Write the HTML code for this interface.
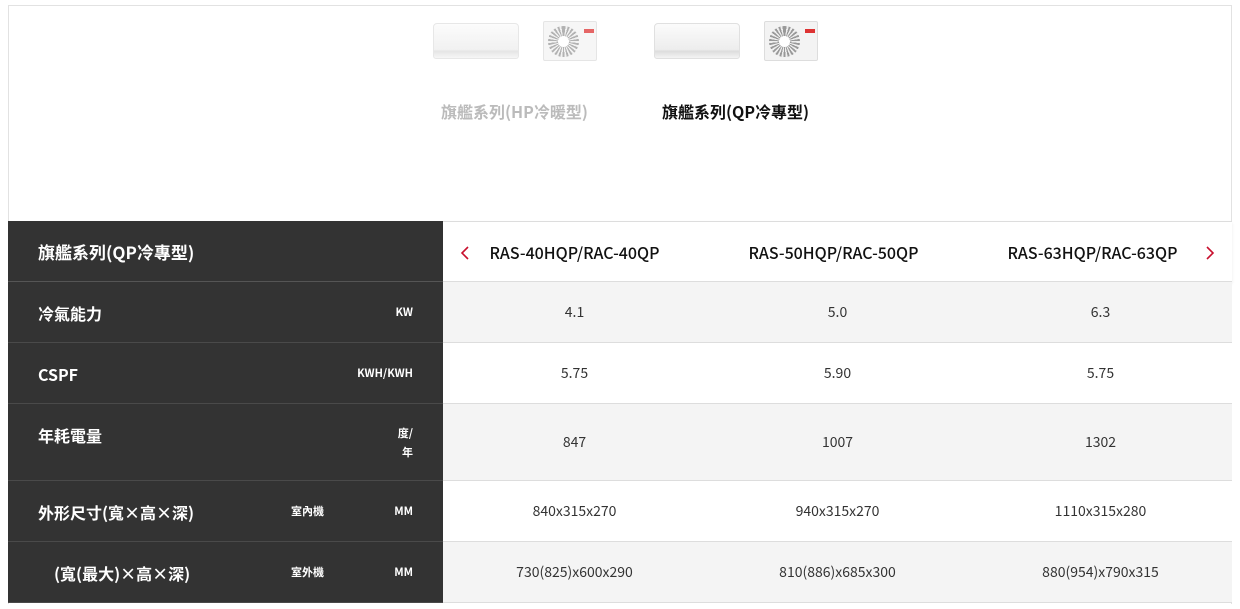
<!DOCTYPE html>
<html><head><meta charset="utf-8"><style>
*{margin:0;padding:0;box-sizing:border-box}
body{width:1240px;height:609px;background:#fff;font-family:"Noto Sans CJK TC","Liberation Sans",sans-serif;position:relative;overflow:hidden}
.box{position:absolute;left:8px;top:5px;width:1224px;height:599px;border:1px solid #e2e2e2;border-bottom:none}
.abs{position:absolute}
.tab{font-size:16px;font-weight:bold;line-height:20px}
.row{position:absolute;left:8px;width:1224px}
.l{position:absolute;left:0;top:0;width:435px;height:100%;background:#333;color:#fff;border-bottom:1px solid #4a4a4a}
.r{position:absolute;left:435px;top:0;width:789px;height:100%;border-bottom:1px solid #ddd}
.c{position:absolute;top:0;height:100%;width:263px;display:flex;align-items:center;justify-content:center;font-size:14px;color:#333}
.t{position:absolute;left:30px;font-size:16px;font-weight:bold;line-height:20px}
.u{position:absolute;font-size:11px;font-weight:bold;text-align:right;line-height:19px}
.ind{width:86px;height:36px;background:linear-gradient(#fbfbfb,#ededed 75%,#ddd 80%,#f4f4f4);border-radius:4px 4px 3px 3px;border:1px solid #e0e0e0}
.out{width:54px;height:40px;background:#f3f3f3;border:1px solid #ddd;border-radius:2px}
.fan{position:absolute;left:4px;top:4px;width:31px;height:31px;border-radius:50%;background:repeating-conic-gradient(#999 0 8deg,#eee 8deg 16deg)}
.fan:after{content:"";position:absolute;left:10px;top:10px;width:11px;height:11px;border-radius:50%;background:#fff}
</style></head><body>
<div class="box"></div>
<div class="abs ind" style="left:433px;top:23px;opacity:.75"></div>
<div class="abs out" style="left:543px;top:21px;opacity:.75"><div class="fan"></div><div class="abs" style="left:40px;top:7px;width:10px;height:4px;background:#d33"></div></div>
<div class="abs ind" style="left:654px;top:23px;"></div>
<div class="abs out" style="left:764px;top:21px;"><div class="fan"></div><div class="abs" style="left:40px;top:7px;width:10px;height:4px;background:#d33"></div></div>
<div class="abs tab" style="left:441px;top:101px;color:#bbb">旗艦系列(HP冷暖型)</div>
<div class="abs tab" style="left:662px;top:101px;color:#111">旗艦系列(QP冷專型)</div>

<div class="row" style="top:221px;height:61px"><div class="l" style="border-bottom-color:#555"><div class="t" style="top:21px;font-size:17px">旗艦系列(QP冷專型)</div></div>
<div class="r" style="background:#fff;border-top:1px solid #ddd;box-shadow:0 2px 3px rgba(0,0,0,.08)">
<svg class="abs" style="left:17px;top:24px" width="10" height="14" viewBox="0 0 10 14"><path d="M8 1L2 7l6 6" fill="none" stroke="#c8102e" stroke-width="1.6"/></svg>
<div class="c" style="left:0;font-size:16px;color:#111;font-weight:500">RAS-40HQP/RAC-40QP</div>
<div class="c" style="left:259px;font-size:16px;color:#111;font-weight:500">RAS-50HQP/RAC-50QP</div>
<div class="c" style="left:518px;font-size:16px;color:#111;font-weight:500">RAS-63HQP/RAC-63QP</div>
<svg class="abs" style="left:762px;top:24px" width="10" height="14" viewBox="0 0 10 14"><path d="M2 1l6 6-6 6" fill="none" stroke="#c8102e" stroke-width="1.6"/></svg></div></div>

<div class="row" style="top:282px;height:61px"><div class="l"><div class="t" style="top:21px">冷氣能力</div><div class="u" style="right:30px;top:21px">KW</div></div>
<div class="r" style="background:#f4f4f4"><div class="c" style="left:0">4.1</div><div class="c" style="left:263px">5.0</div><div class="c" style="left:526px">6.3</div></div></div>

<div class="row" style="top:343px;height:61px"><div class="l"><div class="t" style="top:21px">CSPF</div><div class="u" style="right:30px;top:21px">KWH/KWH</div></div>
<div class="r" style="background:#fff"><div class="c" style="left:0">5.75</div><div class="c" style="left:263px">5.90</div><div class="c" style="left:526px">5.75</div></div></div>

<div class="row" style="top:404px;height:77px"><div class="l"><div class="t" style="top:21px">年耗電量</div><div class="u" style="right:30px;top:20px">度/<br>年</div></div>
<div class="r" style="background:#f4f4f4"><div class="c" style="left:0">847</div><div class="c" style="left:263px">1007</div><div class="c" style="left:526px">1302</div></div></div>

<div class="row" style="top:481px;height:61px"><div class="l"><div class="t" style="top:21px">外形尺寸(寬×高×深)</div><div class="u" style="left:283px;top:21px">室內機</div><div class="u" style="right:30px;top:21px">MM</div></div>
<div class="r" style="background:#fff"><div class="c" style="left:0">840x315x270</div><div class="c" style="left:263px">940x315x270</div><div class="c" style="left:526px">1110x315x280</div></div></div>

<div class="row" style="top:542px;height:61px"><div class="l"><div class="t" style="top:21px;left:46px">(寬(最大)×高×深)</div><div class="u" style="left:283px;top:21px">室外機</div><div class="u" style="right:30px;top:21px">MM</div></div>
<div class="r" style="background:#f4f4f4"><div class="c" style="left:0">730(825)x600x290</div><div class="c" style="left:263px">810(886)x685x300</div><div class="c" style="left:526px">880(954)x790x315</div></div></div>
</body></html>
